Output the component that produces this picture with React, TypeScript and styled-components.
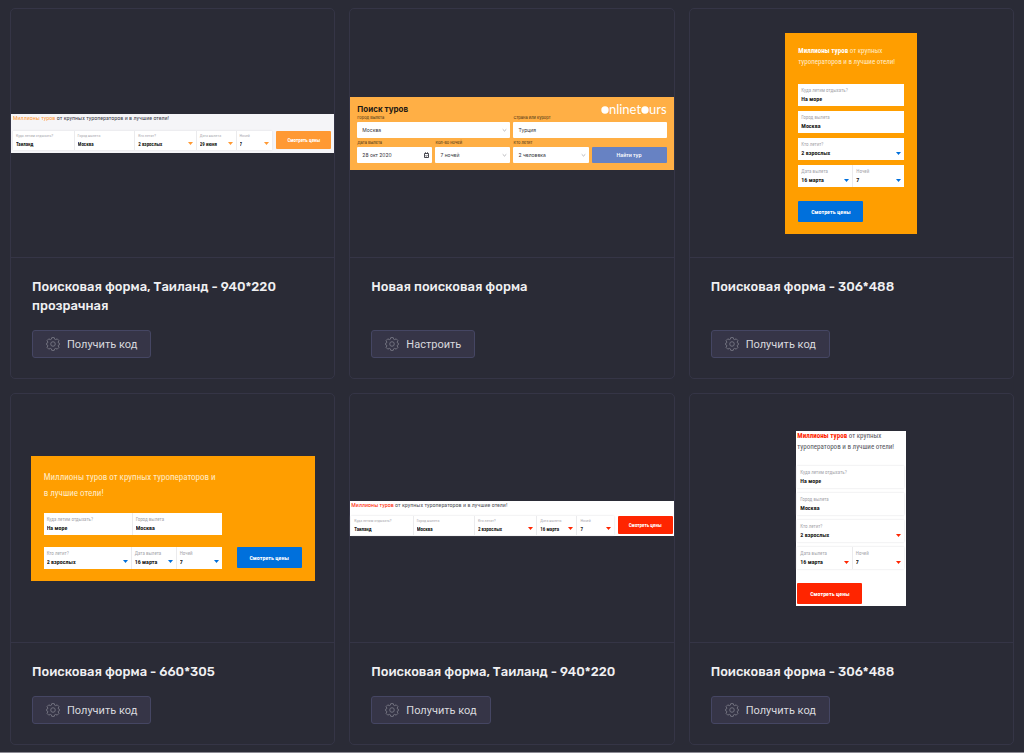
import React from "react";
import styled, { createGlobalStyle, css } from "styled-components";

const Global = createGlobalStyle`
  * { box-sizing: border-box; }
  html { background: #8b8a93; }
  body { margin: 0; font-family: Rubik, Inter, "Liberation Sans", sans-serif; }
  input, select, button { font: inherit; margin: 0; }
  h2, h3, p { margin: 0; }
`;

const narrow = `"Liberation Sans Narrow", "Roboto Condensed", Roboto, sans-serif`;

const Page = styled.main`
  padding: 8px 10px 7px;
  background: #2a2b36;
`;

const Gallery = styled.ul`
  margin: 0;
  padding: 0;
  list-style: none;
  display: grid;
  grid-template-columns: repeat(3, minmax(0, 1fr));
  gap: 14px;
`;

const Card = styled.li`
  display: flex;
  flex-direction: column;
  border: 1px solid #353546;
  border-radius: 5px;
`;

const Preview = styled.div`
  height: 249px;
  display: flex;
  align-items: center;
  justify-content: center;
  border-bottom: 1px solid #353546;
`;

const CardBody = styled.div`
  flex: 1;
  display: flex;
  flex-direction: column;
  align-items: flex-start;
  gap: 15px;
  padding: 19px 21px 20px;
`;

const CardTitle = styled.h2`
  font-size: 13px;
  line-height: 19px;
  font-weight: 500;
  color: #f0f0f2;
`;

const CodeButton = styled.button`
  display: flex;
  align-items: center;
  gap: 7px;
  height: 28px;
  margin-top: auto;
  padding: 0 13px;
  border: 1px solid #454663;
  border-radius: 3px;
  background: #363547;
  color: #d9d9de;
  font-family: Roboto, sans-serif;
  font-size: 11px;
`;

const GearSvg = styled.svg`
  width: 14px;
  height: 14px;
  fill: none;
  stroke: #797986;
  stroke-width: 1;
`;

const Gear = () => (
  <GearSvg viewBox="0 0 16 16" aria-hidden="true">
    <path
      strokeLinejoin="round"
      d="M6.6 .7h2.8l.5 1.8 1.2.5 1.7-.9 2 2-.9 1.7.5 1.2 1 .2v1.6l-1 .2-.5 1.2.9 1.7-2 2-1.7-.9-1.2.5-.5 1.8H6.6l-.5-1.8-1.2-.5-1.7.9-2-2 .9-1.7-.5-1.2-1-.2V7.2l1-.2.5-1.2-.9-1.7 2-2 1.7.9 1.2-.5z"
    />
    <circle cx="8" cy="8" r="2.6" />
  </GearSvg>
);

/* Search widget previews */

type Tone = "sun" | "white" | "mist";

const tones = {
  sun: { back: "#ff9e00", text: "#ffecc9", strong: "#ffffff", accent: "#0070dc" },
  white: { back: "#ffffff", text: "#55555c", strong: "#ff2500", accent: "#ff2500" },
  mist: { back: "#f5f5f8", text: "#44444c", strong: "#ff9d3c", accent: "#ff9933" },
};

const Tall = styled.form<{ $tone: Tone; $flush?: boolean }>`
  width: ${(p) => (p.$flush ? 110 : 132)}px;
  padding: ${(p) => (p.$flush ? "0 2px 2px 1px" : "13px 13px 12px")};
  background: ${(p) => tones[p.$tone].back};
  font-family: ${narrow};
`;

const Wide = styled.form`
  width: 284px;
  padding: 13px 13px 12px;
  background: #ff9e00;
  font-family: ${narrow};
`;

const Strip = styled.form<{ $tone: Tone }>`
  width: 100%;
  padding: ${(p) => (p.$tone === "mist" ? "0 3px 3px 2px" : "0 1px 1px 1px")};
  background: ${(p) => tones[p.$tone].back};
  font-family: ${narrow};
`;

const Slogan = styled.p<{ $tone: Tone; $size: "s" | "m" | "l" }>`
  color: ${(p) => tones[p.$tone].text};
  white-space: nowrap;
  ${(p) =>
    p.$size === "s"
      ? css`font-size: 6px; line-height: 8px;`
      : p.$size === "m"
        ? css`font-size: 7px; line-height: 11px;`
        : css`font-size: 9px; line-height: 16px;`}
  strong {
    color: ${(p) => tones[p.$tone].strong};
    font-weight: ${(p) => (p.$size === "m" ? 700 : 400)};
  }
`;

const Stack = styled.div<{ $flush?: boolean }>`
  display: flex;
  flex-direction: column;
  justify-content: space-between;
  height: 104px;
  margin: ${(p) => (p.$flush ? 13 : 16)}px 0 13px;
`;

const Fields = styled.div<{ $columns: string; $line?: boolean }>`
  display: grid;
  grid-template-columns: ${(p) => p.$columns};
  background: #fff;
  box-shadow: 0 0 2px ${(p) => (p.$line ? "#dcdce0" : "transparent")};
`;

const Cell = styled.label<{ $small?: boolean }>`
  display: flex;
  flex-direction: column;
  min-width: 0;
  height: ${(p) => (p.$small ? 19 : 22)}px;
  padding: ${(p) => (p.$small ? "1px 3px 0 3px" : "2px 3px 0 3px")};
  font-size: ${(p) => (p.$small ? 5 : 6)}px;
  & + & { border-left: 1px solid #ebebed; }
`;

const Caption = styled.span<{ $small?: boolean }>`
  font-size: ${(p) => (p.$small ? 4 : 5)}px;
  line-height: ${(p) => (p.$small ? 7 : 8)}px;
  color: #a8a8ad;
  white-space: nowrap;
`;

const ValueRow = styled.span`
  display: flex;
  align-items: center;
  height: 10px;
`;

const control = css`
  appearance: none;
  display: block;
  flex: 1;
  width: 100%;
  min-width: 0;
  height: 10px;
  padding: 0;
  border: 0;
  background: transparent;
  color: #1c1c20;
  font-weight: 700;
  line-height: 10px;
`;
const TextBox = styled.input`${control}`;
const Picker = styled.select`${control}`;

const Arrow = styled.svg<{ $color: string }>`
  width: 5px;
  height: 3px;
  flex: none;
  fill: ${(p) => p.$color};
`;

const Submit = styled.button<{ $tone: Tone; $small?: boolean }>`
  display: block;
  width: ${(p) => (p.$small ? 55 : 65)}px;
  height: ${(p) => (p.$small ? 18 : 21)}px;
  padding: 0;
  border: 0;
  border-radius: 1px;
  background: ${(p) => tones[p.$tone].accent};
  color: #fff;
  font-size: ${(p) => (p.$small ? 5 : 6)}px;
  font-weight: 700;
  white-space: nowrap;
`;

const StripRow = styled.div<{ $gap: number }>`
  display: grid;
  grid-template-columns: minmax(0, 1fr) auto;
  align-items: center;
  gap: 4px;
  margin-top: ${(p) => p.$gap}px;
`;

const WideRow = styled.div`
  display: grid;
  grid-template-columns: 178px auto;
  justify-content: space-between;
  margin-top: 12px;
`;

interface FieldProps {
  caption: string;
  value: string;
  tone: Tone;
  pick?: boolean;
  small?: boolean;
}

const Field = ({ caption, value, tone, pick, small }: FieldProps) => (
  <Cell $small={small}>
    <Caption $small={small}>{caption}</Caption>
    <ValueRow>
      {pick ? (
        <>
          <Picker defaultValue={value}>
            <option>{value}</option>
          </Picker>
          <Arrow $color={tones[tone].accent} viewBox="0 0 5 3" aria-hidden="true">
            <path d="M0 0h5L2.5 3z" />
          </Arrow>
        </>
      ) : (
        <TextBox defaultValue={value} />
      )}
    </ValueRow>
  </Cell>
);

const TallForm = ({ tone, flush }: { tone: Tone; flush?: boolean }) => (
  <Tall $tone={tone} $flush={flush}>
    <Slogan $tone={tone} $size="m">
      <strong>Миллионы туров</strong> от крупных
      <br />
      туроператоров и в лучшие отели!
    </Slogan>
    <Stack $flush={flush}>
      <Fields $columns="1fr" $line={flush}>
        <Field caption="Куда летим отдыхать?" value="На море" tone={tone} />
      </Fields>
      <Fields $columns="1fr" $line={flush}>
        <Field caption="Город вылета" value="Москва" tone={tone} />
      </Fields>
      <Fields $columns="1fr" $line={flush}>
        <Field caption="Кто летит?" value="2 взрослых" tone={tone} pick />
      </Fields>
      <Fields $columns="54fr 52fr" $line={flush}>
        <Field caption="Дата вылета" value="16 марта" tone={tone} pick />
        <Field caption="Ночей" value="7" tone={tone} pick />
      </Fields>
    </Stack>
    <Submit type="button" $tone={tone}>Смотреть цены</Submit>
  </Tall>
);

const WideForm = () => (
  <Wide>
    <Slogan $tone="sun" $size="l">
      Миллионы туров от крупных туроператоров и
      <br />
      в лучшие отели!
    </Slogan>
    <WideRow>
      <Fields $columns="88fr 90fr">
        <Field caption="Куда летим отдыхать?" value="На море" tone="sun" />
        <Field caption="Город вылета" value="Москва" tone="sun" />
      </Fields>
    </WideRow>
    <WideRow>
      <Fields $columns="87fr 45fr 46fr">
        <Field caption="Кто летит?" value="2 взрослых" tone="sun" pick />
        <Field caption="Дата вылета" value="16 марта" tone="sun" pick />
        <Field caption="Ночей" value="7" tone="sun" pick />
      </Fields>
      <Submit type="button" $tone="sun">Смотреть цены</Submit>
    </WideRow>
  </Wide>
);

const StripForm = ({ tone, date, gap }: { tone: Tone; date: string; gap: number }) => (
  <Strip $tone={tone}>
    <Slogan $tone={tone} $size="s">
      <strong>Миллионы туров</strong> от крупных туроператоров и в лучшие отели!
    </Slogan>
    <StripRow $gap={gap}>
      <Fields $columns="61fr 61fr 62fr 40fr 37fr" $line>
        <Field caption="Куда летим отдыхать?" value="Таиланд" tone={tone} small />
        <Field caption="Город вылета" value="Москва" tone={tone} small />
        <Field caption="Кто летит?" value="2 взрослых" tone={tone} small pick />
        <Field caption="Дата вылета" value={date} tone={tone} small pick />
        <Field caption="Ночей" value="7" tone={tone} small pick />
      </Fields>
      <Submit type="button" $tone={tone} $small>Смотреть цены</Submit>
    </StripRow>
  </Strip>
);

/* Branded form */

const Brand = styled.form`
  width: 100%;
  padding: 6px 7px 7px;
  background: #ffaf45;
  font-family: Inter, sans-serif;
`;

const BrandHead = styled.div`
  display: flex;
  justify-content: space-between;
  align-items: center;
  height: 13px;
`;

const BrandTitle = styled.h3`
  font-size: 8px;
  line-height: 12px;
  font-weight: 700;
  color: #1e1a14;
`;

const Logo = styled.div`
  display: flex;
  align-items: center;
  font-family: Lato, sans-serif;
  font-size: 13px;
  line-height: 13px;
  color: #fff;
`;

const Dot = styled.svg`
  width: 8px;
  height: 8px;
  margin-top: 2px;
  fill: #fff;
`;

const BrandGrid = styled.div`
  display: grid;
  grid-template-columns: repeat(4, minmax(0, 1fr));
  align-items: end;
  gap: 3px;
`;

const BrandField = styled.label<{ $span?: number }>`
  grid-column: span ${(p) => p.$span ?? 1};
  display: flex;
  flex-direction: column;
`;

const BrandCaption = styled.span`
  height: 6px;
  font-size: 4px;
  line-height: 4px;
  color: #3c2c14;
`;

const BrandBox = styled.span`
  display: flex;
  align-items: center;
  height: 16px;
  padding: 0 3px 0 5px;
  border-radius: 1px;
  background: #fff;
  font-size: 5px;
`;

const brandControl = css`
  appearance: none;
  flex: 1;
  width: 100%;
  min-width: 0;
  padding: 0;
  border: 0;
  background: transparent;
  color: #33333a;
`;
const BrandInput = styled.input`${brandControl}`;
const BrandSelect = styled.select`${brandControl}`;

const BrandIcon = styled.svg`
  width: 5px;
  height: 6px;
  flex: none;
  fill: none;
  stroke: #8a8a90;
`;

const BrandSubmit = styled.button`
  height: 16px;
  padding: 0;
  border: 0;
  border-radius: 1px;
  background: #6782c3;
  color: #fff;
  font-size: 5px;
  font-weight: 600;
`;

const Chevron = () => (
  <BrandIcon viewBox="0 0 5 6" aria-hidden="true">
    <path d="M.7 2.3l1.8 1.7 1.8-1.7" strokeWidth=".6" />
  </BrandIcon>
);

const LogoDot = () => (
  <Dot viewBox="0 0 8 8" aria-hidden="true">
    <circle cx="4" cy="4" r="3.7" />
  </Dot>
);

const BrandForm = () => (
  <Brand>
    <BrandHead>
      <BrandTitle>Поиск туров</BrandTitle>
      <Logo role="img" aria-label="onlinetours">
        <LogoDot />
        <span>nlinet</span>
        <LogoDot />
        <span>urs</span>
      </Logo>
    </BrandHead>
    <BrandGrid>
      <BrandField $span={2}>
        <BrandCaption>Город вылета</BrandCaption>
        <BrandBox>
          <BrandSelect defaultValue="Москва"><option>Москва</option></BrandSelect>
          <Chevron />
        </BrandBox>
      </BrandField>
      <BrandField $span={2}>
        <BrandCaption>Страна или курорт</BrandCaption>
        <BrandBox><BrandInput defaultValue="Турция" /></BrandBox>
      </BrandField>
      <BrandField>
        <BrandCaption>Дата вылета</BrandCaption>
        <BrandBox>
          <BrandInput defaultValue="28 окт 2020" />
          <BrandIcon viewBox="0 0 5 6" aria-hidden="true">
            <path d="M.5 1.5h4v4h-4zM1.5 .3v1.2M3.5 .3v1.2M1.5 3.5l.8.8 1.2-1.3" stroke="#34343c" strokeWidth=".9" />
          </BrandIcon>
        </BrandBox>
      </BrandField>
      <BrandField>
        <BrandCaption>Кол-во ночей</BrandCaption>
        <BrandBox>
          <BrandSelect defaultValue="7 ночей"><option>7 ночей</option></BrandSelect>
          <Chevron />
        </BrandBox>
      </BrandField>
      <BrandField>
        <BrandCaption>Кто летит</BrandCaption>
        <BrandBox>
          <BrandSelect defaultValue="2 человека"><option>2 человека</option></BrandSelect>
          <Chevron />
        </BrandBox>
      </BrandField>
      <BrandSubmit type="button">Найти тур</BrandSubmit>
    </BrandGrid>
  </Brand>
);

const items = [
  { title: "Поисковая форма, Таиланд - 940*220 прозрачная", action: "Получить код", preview: <StripForm tone="mist" date="29 июня" gap={9} /> },
  { title: "Новая поисковая форма", action: "Настроить", preview: <BrandForm /> },
  { title: "Поисковая форма - 306*488", action: "Получить код", preview: <TallForm tone="sun" /> },
  { title: "Поисковая форма - 660*305", action: "Получить код", preview: <WideForm /> },
  { title: "Поисковая форма, Таиланд - 940*220", action: "Получить код", preview: <StripForm tone="white" date="16 марта" gap={7} /> },
  { title: "Поисковая форма - 306*488", action: "Получить код", preview: <TallForm tone="white" flush /> },
];

export default function App() {
  return (
    <>
      <Global />
      <Page>
        <Gallery>
          {items.map((item, i) => (
            <Card key={i}>
              <Preview>{item.preview}</Preview>
              <CardBody>
                <CardTitle>{item.title}</CardTitle>
                <CodeButton type="button">
                  <Gear />
                  {item.action}
                </CodeButton>
              </CardBody>
            </Card>
          ))}
        </Gallery>
      </Page>
    </>
  );
}
